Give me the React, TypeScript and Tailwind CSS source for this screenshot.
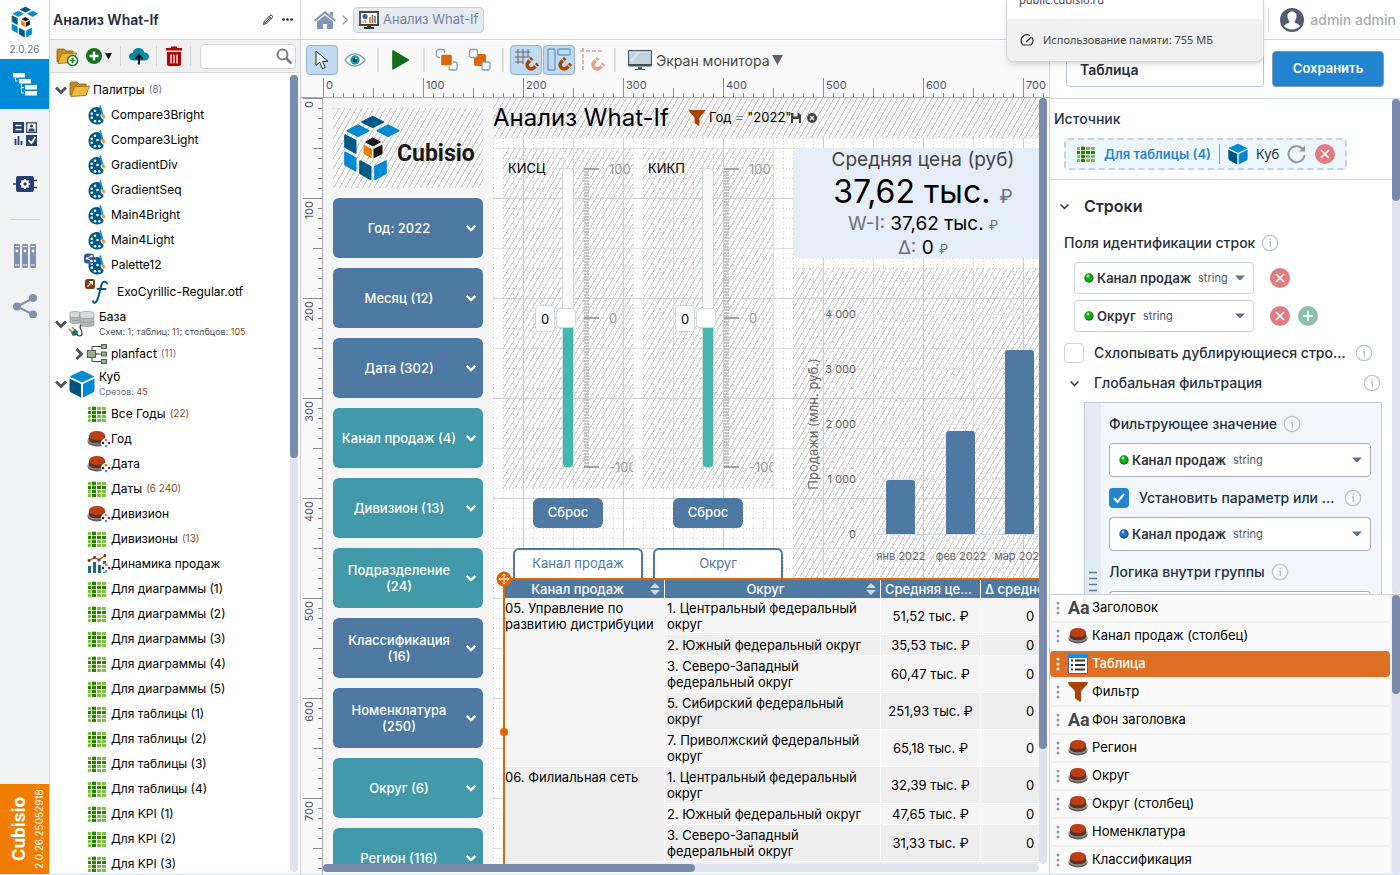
import React, { useState } from 'react';
import clsx from 'clsx';

const HATCH = 'bg-[repeating-linear-gradient(120deg,#cfcfcf_0,#cfcfcf_1px,transparent_1px,transparent_5px)]';

/* ---------- Icons ---------- */

const LogoMark: React.FC<{ className?: string }> = ({ className }) => (
  <svg viewBox="130 342 174 202" className={className} strokeLinejoin="round" strokeWidth="5">
    <g fill="#005a87" stroke="#005a87">
      <path d="M187 365l32-16 32 16-32 16z" />
      <path d="M136 404l32 17v37l-32-18z" />
      <path d="M181 482l32 17v38l-32-18z" />
    </g>
    <g fill="#008ad5" stroke="#008ad5">
      <path d="M143 391l32-16 32 16-32 17z" />
      <path d="M233 391l32-16 32 16-32 17z" />
      <path d="M136 456l32 18v37l-32-18z" />
      <path d="M226 499l33-17v37l-33 18z" />
    </g>
    <g fill="#1b1919" stroke="#1b1919" strokeWidth="3">
      <path d="M198 425l21-12 23 12-22 12z" />
      <path d="M223 447l24-12v25l-24 12z" />
    </g>
    <path d="M193 435l22 12v25l-22-12z" fill="#f07d00" stroke="#f07d00" strokeWidth="3" />
  </svg>
);

const CubeIcon: React.FC<{ className?: string }> = ({ className }) => (
  <svg viewBox="0 0 26 28" className={className}>
    <path d="M13 1l11.500 5.500L13 12 1.500 6.500z" fill="#008ad5" stroke="#008ad5" strokeLinejoin="round" />
    <path d="M.5 8.500l11.500 5.500v13.500L2 22.500Q.5 21.500.5 20z" fill="#005580" />
    <path d="M25.500 8.500L14 14v13.500l10-5q1.500-1 1.500-2.500z" fill="#008ad5" />
  </svg>
);

const GridIcon: React.FC = () => (
  <svg viewBox="0 0 20 16" className="h-4 w-5 shrink-0">
    <rect x="5" width="4" height="16" fill="#b7d8a2" />
    {[0, 1, 2, 3].map((r) =>
      [0, 1, 2, 3].map((c) => (
        <rect
          key={`${r}${c}`}
          x={[1, 5, 10, 15][c]}
          y={1 + r * 4}
          width={c === 0 ? 3 : 4}
          height="3"
          fill={c === 1 || r === 1 ? '#2f7d0a' : '#78c63c'}
        />
      ))
    )}
  </svg>
);

const PuckIcon: React.FC<{ dots?: boolean }> = ({ dots }) => (
  <svg viewBox="0 0 24 18" className="h-[18px] w-6 shrink-0">
    <ellipse cx="10" cy="11.500" rx="9.500" ry="5" fill="#5f5f5f" />
    <ellipse cx="10" cy="10" rx="9.500" ry="4.500" fill="#9a9a9a" />
    <path d="M2 5v5c0 4.500 16 4.500 16 0V5z" fill="#5d3527" />
    <ellipse cx="10" cy="5.500" rx="8" ry="4.500" fill="#bf3f15" />
    {dots && (
      <g>
        <circle cx="19" cy="13" r="5" fill="#fff" />
        <circle cx="19" cy="10" r="1.300" fill="#ef6a3a" />
        <circle cx="16" cy="13" r="1.300" fill="#222" />
        <circle cx="22" cy="13" r="1.300" fill="#b0125b" />
        <circle cx="19" cy="16" r="1.300" fill="#22a7d8" />
      </g>
    )}
  </svg>
);

const PaletteIcon: React.FC<{ shared?: boolean }> = ({ shared }) => (
  <svg viewBox="0 0 20 22" className="-my-1 h-[22px] w-5 shrink-0 overflow-visible">
    <path
      d="M10 3C4.500 3 1.500 7.500 1.500 12S5 20.500 10 20.500c3.500 0 6-1.500 6.500-3.500.3-1.500-1-2-2-2.800-1-1-1.200-3-.5-4.200 1-2 0-5-1-6-1-.8-2-1-3-1z"
      fill="#005a87"
    />
    <g fill="#fff">
      <circle cx="8" cy="6.700" r="1.300" />
      <circle cx="4.800" cy="9.800" r="1.300" />
      <circle cx="4.800" cy="13.800" r="1.300" />
      <circle cx="8" cy="17.300" r="1.300" />
      <circle cx="12.300" cy="17.300" r="1.300" />
      <circle cx="10.500" cy="11" r="1.300" />
    </g>
    <path d="M12.300 2l1.500-1 2.700 9.500-2 .8z" fill="#1a8fd8" />
    <path d="M14.500 11.500l2.500-1c1.500 1 1 3 .3 4.200-1.300-.5-2.300-1.500-2.800-3.200z" fill="#f58a1f" />
    {shared && (
      <g>
        <rect x="-3" y="-.5" width="10" height="10" rx="3" fill="#34599f" />
        <path d="M4.500 2L0 4.500l4.500 2.500" fill="none" stroke="#fff" strokeWidth="1" />
        <circle cx="0" cy="4.500" r="1.200" fill="#fff" />
        <circle cx="4.500" cy="2" r="1.200" fill="#fff" />
        <circle cx="4.500" cy="7" r="1.200" fill="#fff" />
      </g>
    )}
  </svg>
);

const FontIcon = () => (
  <svg viewBox="0 0 24 26" className="h-[26px] w-6 shrink-0">
    <rect width="10" height="10" rx="2.500" fill="#86390d" />
    <path d="M2.500 7.500l3-3M5 2.500l2.500 2.500V2.500z" stroke="#fff" fill="#fff" strokeWidth="1.200" />
    <path
      d="M22 4.500c-.5-2-3.500-2.500-5 0-2 4-3 17-6.500 19-1.500.6-2.500-.3-2.500-1.200M12.500 10h8"
      fill="none"
      stroke="#005a87"
      strokeWidth="2"
      strokeLinecap="round"
    />
  </svg>
);

const FolderIcon: React.FC<{ add?: boolean }> = ({ add }) => (
  <svg viewBox="0 0 22 19" className="h-[19px] w-[22px] shrink-0">
    <path d="M1 15V3.500Q1 2 2.500 2H8l2 2h7v11z" fill="#c98d1e" stroke="#8a5a10" strokeWidth=".8" />
    <path d="M2 16.500l3.500-9.800L20.500 6 17 15.500z" fill="#ecb93c" stroke="#9a6a14" strokeWidth=".8" />
    {add && (
      <g>
        <circle cx="16.500" cy="13.500" r="5" fill="#fff" stroke="#1a7a1f" strokeWidth="1.500" />
        <path d="M16.500 10.700v5.600M13.700 13.500h5.600" stroke="#1a7a1f" strokeWidth="1.600" />
      </g>
    )}
  </svg>
);

const DatabaseIcon = () => (
  <svg viewBox="0 0 26 28" className="h-7 w-[26px] shrink-0">
    {[[1, 2, 10, 3], [11, 2, 14, 4]].map(([x, y, w, h]) => (
      <g key={x} stroke="#8f979b" strokeWidth=".7">
        {[2, 1, 0].map((i) => (
          <path
            key={i}
            d={`M${x} ${y + i * h + 1}v${h}c0 2 ${w} 2 ${w} 0v-${h}c0-2-${w}-2-${w} 0z`}
            fill={i === 0 ? '#d5dadd' : '#b3babe'}
          />
        ))}
      </g>
    ))}
    <path d="M7 23c2 4 6 4 6 0 0-4-4-5-1-8" fill="none" stroke="#444" strokeWidth="1.200" />
    <path d="M0 19l3 3M3 17l3 3" stroke="#b37a2d" strokeWidth="1.400" />
    <path d="M2 23l4-4 3 3-1 3-4 1z" fill="#1e6f74" />
  </svg>
);

const SchemaIcon = () => (
  <svg viewBox="0 0 20 20" className="h-5 w-5 shrink-0" stroke="#48694b" fill="#94b292">
    <path d="M7 10h8M10 10H5V2.500h10M5 10v7.500h10" fill="none" stroke="#444" />
    <rect x=".5" y="6.500" width="8" height="7" />
    <rect x="14.500" y=".5" width="5" height="4" />
    <rect x="14.500" y="8" width="5" height="4" />
    <rect x="14.500" y="15.500" width="5" height="4" />
  </svg>
);

const DynamicsIcon = () => (
  <svg viewBox="0 0 24 20" className="h-5 w-6 shrink-0">
    <path d="M1 12h3v7H1zM6 8h3v11H6zM11 11h3v8h-3zM16 7h3v12h-3z" fill="#236b85" />
    <path d="M2 6.500l6-3 4 2.500 6-4.500" fill="none" stroke="#a35418" strokeWidth="1.200" />
    <g fill="#7a2f06">
      <circle cx="2" cy="6.500" r="1.400" />
      <circle cx="7.500" cy="3.500" r="1.400" />
      <circle cx="12" cy="6" r="1.400" />
      <circle cx="18" cy="1.500" r="1.400" />
    </g>
    <circle cx="19" cy="14" r="4.500" fill="#fff" />
    <circle cx="19" cy="11" r="1.300" fill="#ef6a3a" />
    <circle cx="16" cy="14" r="1.300" fill="#222" />
    <circle cx="22" cy="14" r="1.300" fill="#b0125b" />
    <circle cx="19" cy="17" r="1.300" fill="#22a7d8" />
  </svg>
);

const FunnelIcon: React.FC<{ className?: string }> = ({ className }) => (
  <svg viewBox="0 0 20 20" className={className}>
    <path d="M.5 0h19q.8 0 .3 1.200-.8 2-3.300 4.300-3.500 3-3.500 5v8.200q0 1.600-1.300.8L8 17.300q-1-.8-1-2V10.500q0-2-3.500-5Q1 3.200.2 1.200-.3 0 .5 0z" fill="#ab4300" />
  </svg>
);

const TextIcon = () => (
  <span aria-hidden="true" className="w-6 shrink-0 font-[Roboto] text-[18px] leading-5 font-bold text-[#484848]">Aa</span>
);

const ListIcon = () => (
  <svg viewBox="0 0 20 20" className="mr-1 h-5 w-5 shrink-0">
    <path d="M.5.5h19v19H.5z" fill="#fff" stroke="#3c6a96" />
    <path d="M0 0h20v4H0z" fill="#1590f2" />
    <path d="M3 6.500h2M7 6.500h10M3 11h2M7 11h10M3 15.500h2M7 15.500h10" stroke="#333" strokeWidth="1.800" />
  </svg>
);

const Chevron: React.FC<{ className?: string; width?: number }> = ({ className, width = 3 }) => (
  <svg viewBox="0 0 14 14" className={className} fill="none" stroke="currentColor" strokeWidth={width}>
    <path d="M2 4.500l5 5 5-5" />
  </svg>
);

const Ball: React.FC<{ blue?: boolean }> = ({ blue }) => (
  <svg viewBox="0 0 10 10" className="size-[10px] shrink-0">
    <circle cx="5" cy="5" r="4.700" fill={blue ? '#1c4f9c' : '#11800c'} />
    <circle cx="4.700" cy="4.400" r="3.500" fill={blue ? '#2b71cf' : '#17ae10'} />
    <circle cx="4" cy="3" r="1.500" fill={blue ? '#92bdf0' : '#8ce885'} />
  </svg>
);

const Info = () => (
  <svg viewBox="0 0 18 18" className="size-[18px] shrink-0">
    <circle cx="9" cy="9" r="7.700" fill="none" stroke="#bac5d1" strokeWidth="1.300" />
    <path d="M8 8h1.300v5M9.200 4.500v1.600" fill="none" stroke="#bac5d1" strokeWidth="1.500" />
  </svg>
);

const RoundButton: React.FC<{ kind: 'remove' | 'add'; label: string }> = ({ kind, label }) => (
  <button aria-label={label} className={clsx('flex size-5 items-center justify-center rounded-full', kind === 'add' ? 'bg-[#8dc0b1]' : 'bg-[#e07c7f]')}>
    <svg viewBox="0 0 12 12" className="size-3" stroke="#fff" strokeWidth="1.700">
      <path d={kind === 'add' ? 'M6 1v10M1 6h10' : 'M2 2l8 8M10 2l-8 8'} />
    </svg>
  </button>
);

const Caret: React.FC<{ className?: string }> = ({ className }) => (
  <svg viewBox="0 0 10 6" className={clsx('h-[6px] w-[10px] shrink-0', className)}>
    <path d="M0 .5h10L6 4.800Q5 5.500 4 4.800z" fill="#62728f" />
  </svg>
);

const Magnet: React.FC<{ color: string }> = ({ color }) => (
  <g transform="translate(12.500 11.500) rotate(-225 6 6)" fill="none" stroke={color} strokeWidth="3.600">
    <path d="M2 7.500V5.500a4 4 0 0 1 8 0v2" transform="rotate(90 6 6)" />
    <path d="M2 8.700v2.300M10 8.700v2.300" transform="rotate(90 6 6)" />
  </g>
);

/* ---------- Left rail ---------- */

const Rail = () => (
  <aside className="flex w-[49px] shrink-0 flex-col items-center bg-[#f1f2f4]">
    <div className="flex h-[59px] w-full flex-col items-center bg-white pt-[6px]">
      <LogoMark className="h-8 w-7 shrink-0" />
      <span className="mt-[3px] text-[10px] leading-4 text-gray-500">2.0.26</span>
    </div>
    <button aria-label="Структура" className="flex h-[50px] w-full items-center justify-center bg-[#008ad5]">
      <svg viewBox="0 0 24 24" className="size-6">
        <path d="M0 1h12v4.500H0zM6 7h12v4.500H6zM12 13h12v4.500H12zM12 19h12v4.500H12z" fill="#fff" />
        <path d="M2.500 6v3h2M8.500 12v9h2.500M8.500 15.500H11" fill="none" stroke="#fff" />
      </svg>
    </button>
    <button aria-label="Виджеты" className="flex h-[50px] w-full items-center justify-center">
      <svg viewBox="0 0 24 24" className="size-6">
        <path d="M0 0h11v11H0zM13 13h11v11H13z" fill="#27406f" />
        <path d="M2.500 3.500h6M2.500 7.500h6" stroke="#fff" strokeWidth="1.500" />
        <path d="M13.800.8h9.500v9.500h-9.500z" fill="#fff" stroke="#27406f" strokeWidth="1.200" />
        <circle cx="18.500" cy="4" r="1.600" fill="#27406f" />
        <path d="M15.500 9.500V8q0-1.800 3-1.800t3 1.800v1.500z" fill="#27406f" />
        <path d="M2.500 17v6M5.500 14v9M8.500 19v4" stroke="#27406f" strokeWidth="1.800" />
        <path d="M15.500 18l3 3 4-6" fill="none" stroke="#fff" strokeWidth="1.800" />
      </svg>
    </button>
    <button aria-label="Настройки" className="flex h-[50px] w-full items-center justify-center">
      <svg viewBox="0 0 24 18" className="h-[18px] w-6">
        <path d="M0 9h4M20 5.500h4M20 12.500h4" stroke="#27406f" strokeWidth="1.500" />
        <rect x="3" y="1" width="18" height="16" rx="2" fill="#27406f" />
        <circle cx="12" cy="9" r="2.800" fill="none" stroke="#fff" strokeWidth="2.400" />
        <path d="M12 4v10M7 9h10M8.500 5.500l7 7M15.500 5.500l-7 7" stroke="#fff" strokeWidth="1.500" />
        <circle cx="12" cy="9" r="1.700" fill="#27406f" />
      </svg>
    </button>
    <hr className="mt-[10px] mb-[11px] w-[30px] border-gray-300" />
    <button aria-label="Библиотека" className="flex h-[50px] w-full items-center justify-center">
      <svg viewBox="0 0 24 24" className="size-6 overflow-visible">
        {[1, 9, 17].map((x) => (
          <g key={x}>
            <rect x={x} width="6" height="24" rx=".8" fill="#8292ae" />
            <path d={`M${x + 1} 2.500h4M${x + 1} 21h4`} stroke="#f1f2f4" />
            <circle cx={x + 3} cy="7" r="1.400" fill="#f1f2f4" />
          </g>
        ))}
      </svg>
    </button>
    <button aria-label="Поделиться" className="flex h-[50px] w-full items-center justify-center">
      <svg viewBox="0 0 24 24" className="size-6" fill="#8292ae">
        <path d="M20 4.500L4 12.500l16 8" fill="none" stroke="#8292ae" strokeWidth="2" />
        <circle cx="20" cy="4" r="4" />
        <circle cx="4" cy="12.500" r="4" />
        <circle cx="20" cy="20.500" r="4" />
      </svg>
    </button>
    <div className="mt-auto flex h-[90px] w-full rotate-180 items-center bg-[#f07d00] pl-[2px] text-white">
      <span className="text-[10px] leading-4 [writing-mode:vertical-rl]">2.0.26.25052918</span>
      <span className="font-[Roboto] text-[19px] leading-6 font-bold [writing-mode:vertical-rl]">Cubisio</span>
    </div>
  </aside>
);

/* ---------- Object tree ---------- */

interface TreeLeaf {
  name: string;
  count?: string;
  icon: React.ReactNode;
}

const palettes = ['Compare3Bright', 'Compare3Light', 'GradientDiv', 'GradientSeq', 'Main4Bright', 'Main4Light', 'Palette12'];

const slices: TreeLeaf[] = [
  { name: 'Все Годы', count: '(22)', icon: <GridIcon /> },
  { name: 'Год', icon: <PuckIcon dots /> },
  { name: 'Дата', icon: <PuckIcon dots /> },
  { name: 'Даты', count: '(6 240)', icon: <GridIcon /> },
  { name: 'Дивизион', icon: <PuckIcon dots /> },
  { name: 'Дивизионы', count: '(13)', icon: <GridIcon /> },
  { name: 'Динамика продаж', icon: <DynamicsIcon /> },
  ...[1, 2, 3, 4, 5].map((n) => ({ name: `Для диаграммы (${n})`, icon: <GridIcon /> })),
  ...[1, 2, 3, 4].map((n) => ({ name: `Для таблицы (${n})`, icon: <GridIcon /> })),
  ...[1, 2, 3].map((n) => ({ name: `Для KPI (${n})`, icon: <GridIcon /> })),
];

const Leaf: React.FC<TreeLeaf> = ({ name, count, icon }) => (
  <li className="flex h-[25px] items-center pl-[37px]">
    <span className="flex w-6 shrink-0">{icon}</span>
    {name}
    {count && <span className="ml-1 text-[10px] text-[#8a4b12]">{count}</span>}
  </li>
);

const Tree = () => (
  <aside className="flex w-[252px] shrink-0 flex-col border-x border-[#cfd2da] bg-white">
    <div className="flex h-10 shrink-0 items-center border-b border-[#d0d2d8] pr-[2px] pl-[3px]">
      <h1 className="flex-1 text-[14px] font-semibold text-[#1f2a44]">Анализ What-If</h1>
      <button aria-label="Переименовать" className="mr-2">
        <svg viewBox="0 0 12 12" className="size-3" fill="none" stroke="#333">
          <path d="M1.500 10.500l.8-3 5.700-6q1-.8 2 0t.2 2L4.300 9.500zM2.300 7.500l2 2M4 8l5-5M7 2.500l2.500 2" />
        </svg>
      </button>
      <button aria-label="Меню" className="w-4">
        <svg viewBox="0 0 12 3" className="h-[3px] w-3" fill="#222">
          <circle cx="1.500" cy="1.500" r="1.300" /><circle cx="5.500" cy="1.500" r="1.300" /><circle cx="9.500" cy="1.500" r="1.300" />
        </svg>
      </button>
    </div>
    <div className="flex h-[33px] shrink-0 items-center border-b border-[#d8d8d8] bg-[#f0f0f0] pr-1 pl-[6px]">
      <button aria-label="Создать папку"><FolderIcon add /></button>
      <button aria-label="Добавить" className="ml-2 flex items-center">
        <svg viewBox="0 0 26 16" className="h-4 w-[26px]">
          <circle cx="8" cy="8" r="8" fill="#16731c" />
          <path d="M8 3.500v9M3.500 8h9" stroke="#fff" strokeWidth="2.400" />
          <path d="M19 5h7l-3.500 6.500z" fill="#111" />
        </svg>
      </button>
      <i className="mx-2 h-5 w-px bg-gray-300" />
      <button aria-label="Загрузить">
        <svg viewBox="0 0 20 17" className="h-[17px] w-5">
          <path d="M5 12.500C2 12.500 0 11 0 8.500S2 5 4 5c0-3 2.500-5 5.500-5S15 2 15.200 4.500C18 4.500 20 6 20 8.500s-2 4-4.500 4z" fill="#0787a8" />
          <path d="M10 16.500V8M6.500 11L10 7.300l3.500 3.700" fill="none" stroke="#111" strokeWidth="2" />
        </svg>
      </button>
      <i className="mx-[7px] h-5 w-px bg-gray-300" />
      <button aria-label="Удалить" className="ml-[2px]">
        <svg viewBox="0 0 16 20" className="h-5 w-4">
          <path d="M0 2h5V.5h6V2h5v2.500H0zM1 6h14v12q0 2-2 2H3q-2 0-2-2z" fill="#b40000" />
          <path d="M5 8.500v9M8 8.500v9M11 8.500v9" stroke="#f0f0f0" strokeWidth="1.400" />
        </svg>
      </button>
      <i className="mx-2 h-5 w-px bg-gray-300" />
      <label className="ml-auto flex h-[25px] w-24 items-center rounded border border-gray-300 bg-white pr-[3px]">
        <input aria-label="Поиск" className="w-0 flex-1 bg-transparent px-1 text-xs outline-none" />
        <svg viewBox="0 0 16 16" className="size-4" fill="none" stroke="#7d7d7d" strokeWidth="2">
          <circle cx="6.500" cy="6.500" r="5" /><path d="M10 10l5.500 5.500" strokeWidth="2.600" />
        </svg>
      </label>
    </div>
    <div className="flex min-h-0 flex-1">
      <ul className="min-w-0 flex-1 overflow-hidden pt-1 text-[12px] whitespace-nowrap text-black">
        <li className="flex h-[25px] items-center pl-1">
          <Chevron className="mr-px size-[14px] text-gray-600" />
          <FolderIcon />
          <span className="ml-[2px]">Палитры</span>
          <span className="ml-1 text-[10px] text-gray-500">(8)</span>
        </li>
        {palettes.map((name) => (
          <Leaf key={name} name={name} icon={<PaletteIcon shared={name === 'Palette12'} />} />
        ))}
        <li className="flex h-[29px] items-center gap-2 pl-[35px]"><FontIcon />ExoCyrillic-Regular.otf</li>
        <li className="flex h-[35px] items-center pl-1">
          <Chevron className="mr-px size-[14px] text-gray-600" />
          <DatabaseIcon />
          <span className="ml-1 flex flex-col">
            <span className="leading-4">База</span>
            <span className="text-[9px] leading-[14px] text-gray-600">
              Схем: <b className="font-normal text-[#8a4b12]">1</b>; таблиц: <b className="font-normal text-[#8a4b12]">11</b>; столбцов: <b className="font-normal text-[#8a4b12]">105</b>
            </span>
          </span>
        </li>
        <li className="flex h-[25px] items-center pl-[22px]">
          <Chevron className="mr-px size-[14px] -rotate-90 text-gray-600" />
          <SchemaIcon />
          <span className="ml-1">planfact</span>
          <span className="ml-1 text-[10px] text-gray-500">(11)</span>
        </li>
        <li className="flex h-[35px] items-center pl-1">
          <Chevron className="mr-px size-[14px] text-gray-600" />
          <CubeIcon className="h-7 w-[26px] shrink-0" />
          <span className="ml-1 flex flex-col">
            <span className="leading-4">Куб</span>
            <span className="text-[9px] leading-[14px] text-gray-500">Срезов: <b className="font-normal text-[#8a4b12]">45</b></span>
          </span>
        </li>
        {slices.map((s) => <Leaf key={s.name} {...s} />)}
      </ul>
      <div className="my-[2px] mr-[2px] w-2 rounded bg-[#dfe3ee]">
        <div className="h-[48%] rounded bg-[#7a8bae]" />
      </div>
    </div>
  </aside>
);

/* ---------- Top bars ---------- */

const Header = () => (
  <header className="flex h-10 shrink-0 items-center border-b border-[#cfd2da] bg-white pr-1 pl-3">
    <a href="#home" aria-label="Главная">
      <svg viewBox="0 0 24 20" className="h-5 w-6" fill="#8296bb">
        <path d="M12 1l11 9-1.300 1.500L12 3.800l-9.700 7.700L1 10z" />
        <path d="M4 11.500l8-6.300 8 6.300V19h-6v-5h-4v5H4zM17 2h3v5l-3-2.400z" />
      </svg>
    </a>
    <Chevron width={1.500} className="mx-[2px] size-3 -rotate-90 text-[#8296bb]" />
    <a href="#dashboard" className="flex h-[26px] items-center gap-1 rounded border border-[#c3cfe2] bg-[#e6eaf1] px-[5px] text-[13px] text-[#73839f]">
      <svg viewBox="0 0 20 18" className="h-[18px] w-5">
        <path d="M1 1h18v13H1z" fill="#fff" stroke="#444" strokeWidth="1.800" />
        <path d="M5 17h10M8 15h4" stroke="#333" strokeWidth="2" />
        <circle cx="6" cy="5.500" r="2.500" fill="#1b65b5" /><path d="M6 5.500V3a2.500 2.500 0 0 1 2.500 2.500z" fill="#e2421b" />
        <path d="M11 12V6M13.500 12V4" stroke="#e2561b" strokeWidth="1.500" /><path d="M16 12V5" stroke="#178d9e" strokeWidth="1.500" />
        <path d="M4 12v-2M6.500 12v-3" stroke="#e2a51b" strokeWidth="1.500" />
      </svg>
      Анализ What-If
    </a>
    <div className="ml-auto flex items-center border-l border-gray-300 pl-[11px] text-[14px] font-medium text-[#a7abb2]">
      <svg viewBox="0 0 24 24" className="mr-[6px] size-6">
        <circle cx="12" cy="12" r="12" fill="#4e5d74" />
        <path d="M12 3.500c3 0 4.800 2 4.500 5-.2 2.500-1.200 4-2 5 .2 2 4.500 2 5.500 4.500-4 4.500-12 4.500-16 0 1-2.500 5.300-2.500 5.500-4.500-.8-1-1.800-2.500-2-5-.3-3 1.500-5 4.500-5z" fill="#fff" />
      </svg>
      admin admin
    </div>
  </header>
);

const ToolButton: React.FC<{ label: string; active?: boolean; children: React.ReactNode }> = ({ label, active, children }) => (
  <button
    aria-label={label}
    className={clsx('flex h-[30px] w-8 items-center justify-center rounded border', active ? 'border-[#8fb1d6] bg-[#c0daf0]' : 'border-transparent')}
  >
    {children}
  </button>
);

const Divider = () => <i className="mx-[6px] h-6 w-[2px] bg-[#dcdcdc]" />;

const Toolbar = () => (
  <div className="flex h-[34px] items-end bg-[#f9f9f9] pl-[5px]">
    <div className="flex h-[30px] items-center">
      <ToolButton label="Выбор" active>
        <svg viewBox="0 0 14 20" className="h-5 w-[14px]">
          <path d="M1 1v14.500l3.700-3.300 2.800 6.500 2.700-1.200-2.700-6.200H13z" fill="#fff" stroke="#222" />
        </svg>
      </ToolButton>
      <div className="w-px" />
      <ToolButton label="Просмотр">
        <svg viewBox="0 0 22 14" className="h-[14px] w-[22px]">
          <path d="M1 7q4.500-6 10-6t10 6q-4.500 6-10 6T1 7z" fill="#fff" stroke="#86a1a6" strokeWidth="1.300" />
          <circle cx="11" cy="7" r="4.700" fill="#00a0b8" /><circle cx="11" cy="7" r="2.300" fill="#13323a" />
          <circle cx="12" cy="5.500" r="1" fill="#fff" />
        </svg>
      </ToolButton>
      <Divider />
      <ToolButton label="Запустить">
        <svg viewBox="0 0 18 20" className="h-5 w-[18px]"><path d="M1 0q-.8 0-.8 1v18q0 1 .8.800l16-9.300q.8-.5 0-1z" fill="#136d1c" /></svg>
      </ToolButton>
      <Divider />
      <ToolButton label="На передний план">
        <svg viewBox="0 0 24 24" className="size-6" fill="none" stroke="#7e9fc5" strokeWidth="1.300">
          <rect x="1.500" y="1.500" width="8" height="8" rx="2" /><rect x="14" y="14" width="8" height="8" rx="2" />
          <rect x="5.500" y="6" width="12" height="12" rx="2" fill="#df6600" stroke="#f9f9f9" />
        </svg>
      </ToolButton>
      <div className="w-px" />
      <ToolButton label="На задний план">
        <svg viewBox="0 0 24 24" className="size-6" stroke="#7e9fc5" strokeWidth="1.300">
          <rect x="6" y="6" width="12" height="12" rx="2" fill="#df6600" stroke="none" />
          <rect x="1.500" y="1.500" width="8" height="8" rx="2" fill="#f9f9f9" /><rect x="14" y="14" width="8" height="8" rx="2" fill="#f9f9f9" />
        </svg>
      </ToolButton>
      <Divider />
      <ToolButton label="Привязка к сетке" active>
        <svg viewBox="0 0 26 26" className="size-[26px]">
          <path d="M5 2v15M10 2v15M15 2v8M2 5h15M2 10h15M2 15h8" stroke="#666" fill="none" />
          <Magnet color="#ac4300" />
        </svg>
      </ToolButton>
      <div className="w-px" />
      <ToolButton label="Привязка к объектам" active>
        <svg viewBox="0 0 26 26" className="size-[26px]" fill="none" stroke="#6f9bc8" strokeWidth="1.400">
          <rect x="2" y="2" width="7" height="21" rx="1" /><rect x="12" y="2" width="12" height="6" rx="1" />
          <Magnet color="#ac4300" />
        </svg>
      </ToolButton>
      <div className="w-px" />
      <ToolButton label="Направляющие">
        <svg viewBox="0 0 26 26" className="size-[26px]">
          <path d="M4 1v22M1 4h23" stroke="#e5a3a8" strokeWidth="1.700" strokeDasharray="4 2" />
          <Magnet color="#dba582" />
        </svg>
      </ToolButton>
      <Divider />
      <button className="flex items-center pl-[6px] text-[14px] text-[#444]">
        <svg viewBox="0 0 24 20" className="mr-1 h-5 w-6">
          <path d="M.5.500h23v15H.5z" fill="#c0d2de" stroke="#3d4f5c" /><path d="M.5 14h23v2.500H.5z" fill="#40525f" />
          <path d="M2 10L9 2h4L4 12z" fill="#d6e3eb" /><path d="M10 17h4v2h3v1H7v-1h3z" fill="#52636f" />
        </svg>
        Экран монитора
        <svg viewBox="0 0 11 10" className="ml-[2px] h-[10px] w-[11px]"><path d="M0 0h11L5.500 10z" fill="#606060" /></svg>
      </button>
    </div>
  </div>
);

/* ---------- Rulers ---------- */

const steps = [0, 100, 200, 300, 400, 500, 600, 700];

const TopRuler = () => (
  <div className="flex h-[23px] shrink-0 overflow-hidden border-b border-[#aaa] bg-[#f9f9f9] pl-[22px]">
    {steps.map((n) => (
      <div key={n} className="relative h-full w-[100px] shrink-0 pl-[3px] text-[11px] leading-[20px] text-gray-600">
        <svg viewBox="0 0 100 22" className="absolute inset-0 h-[22px] w-[100px]" stroke="#8c8c8c">
          <path d="M.5 3v19M50.500 13v9" />
          <path d="M10.500 18v4M20.500 18v4M30.500 18v4M40.500 18v4M60.500 18v4M70.500 18v4M80.500 18v4M90.500 18v4" />
        </svg>
        {n}
      </div>
    ))}
  </div>
);

const SideRuler = () => (
  <div className="flex w-[22px] shrink-0 flex-col overflow-hidden border-r border-[#aaa] bg-[#f9f9f9]">
    {steps.map((n) => (
      <div key={n} className="relative flex h-[100px] w-full shrink-0 items-start pt-[3px] text-[11px] leading-[17px] text-gray-600">
        <svg viewBox="0 0 21 100" className="absolute inset-0 h-[100px] w-[21px]" stroke="#8c8c8c">
          <path d="M2 .5h19M12 50.500h9" />
          <path d="M17 10.500h4M17 20.500h4M17 30.500h4M17 40.500h4M17 60.500h4M17 70.500h4M17 80.500h4M17 90.500h4" />
        </svg>
        <span className="rotate-180 [writing-mode:vertical-rl]">{n}</span>
      </div>
    ))}
  </div>
);

/* ---------- Dashboard canvas ---------- */

const CanvasGrid = () => (
  <svg className="absolute inset-0 size-full">
    <defs>
      <pattern id="dots" width="10" height="10" patternUnits="userSpaceOnUse">
        <path d="M.5 0v10M0 .5h10" stroke="#d9d9d9" strokeDasharray="1 2" />
      </pattern>
      <pattern id="lines" width="100" height="100" patternUnits="userSpaceOnUse">
        <rect width="100" height="100" fill="url(#dots)" />
        <path d="M50.500 0v100M0 50.500h100" stroke="#e0e0e0" />
        <path d="M.5 0v100M0 .5h100" stroke="#cfcfcf" />
      </pattern>
    </defs>
    <rect width="100%" height="100%" fill="url(#lines)" />
  </svg>
);

const filters = [
  { name: 'Год: 2022', teal: false },
  { name: 'Месяц (12)', teal: false },
  { name: 'Дата (302)', teal: false },
  { name: 'Канал продаж (4)', teal: true },
  { name: 'Дивизион (13)', teal: true },
  { name: 'Подразделение (24)', teal: true },
  { name: 'Классификация (16)', teal: false },
  { name: 'Номенклатура (250)', teal: false },
  { name: 'Округ (6)', teal: true },
  { name: 'Регион (116)', teal: true },
];

const FilterColumn = () => (
  <div className="flex w-[170px] shrink-0 flex-col gap-[10px] bg-[#f5f5f5] p-[10px]">
    <div className={clsx('flex h-20 shrink-0 items-center pl-[10px]', HATCH)}>
      <LogoMark className="h-[68px] w-[58px] shrink-0" />
      <span className="-ml-1 pt-3 font-[Roboto] text-[23px] leading-8 font-bold text-[#1b1919]">Cubisio</span>
    </div>
    {filters.map((f) => (
      <button
        key={f.name}
        className={clsx('flex h-[60px] shrink-0 items-center rounded-md pr-[6px] text-[13px] leading-4 font-medium text-white', f.teal ? 'bg-[#4199a9]' : 'bg-[#4e79a3]')}
      >
        <span className="flex-1 px-1">{f.name}</span>
        <Chevron width={2.600} className="size-3" />
      </button>
    ))}
  </div>
);

const WhatIfSlider: React.FC<{ name: string }> = ({ name }) => {
  const [value, setValue] = useState(0);

  return (
    <div className={clsx('flex h-[340px] w-[130px] overflow-hidden', HATCH)}>
      <div className="flex w-[52px] shrink-0 flex-col pt-3">
        <span className="pl-[5px] text-[13px] leading-4 text-black">{name}</span>
        <input
          aria-label={`${name}, значение`}
          value={value}
          onChange={(e) => setValue(Number(e.target.value) || 0)}
          className="mt-[129px] h-[27px] w-5 self-end rounded-sm border border-gray-300 bg-white text-center text-[13px] text-black"
        />
      </div>
      <input
        type="range"
        aria-label={name}
        min={-100}
        max={100}
        value={value}
        onChange={(e) => setValue(Number(e.target.value))}
        className="mt-5 ml-[7px] h-[300px] w-3 shrink-0 appearance-none rounded border border-gray-300 bg-[linear-gradient(to_top,#42b8b0_50%,#f9f9f9_50%)] [direction:rtl] [writing-mode:vertical-lr] [&::-webkit-slider-thumb]:-ml-[5px] [&::-webkit-slider-thumb]:size-5 [&::-webkit-slider-thumb]:appearance-none [&::-webkit-slider-thumb]:rounded-sm [&::-webkit-slider-thumb]:border [&::-webkit-slider-thumb]:border-gray-300 [&::-webkit-slider-thumb]:bg-white"
      />
      <svg viewBox="0 0 15 300" className="mt-5 ml-[10px] h-[300px] w-[15px] shrink-0" stroke="#c4c4c4">
        <path d="M2.500 0v298" strokeWidth="5" strokeDasharray="2 1" />
        <path d="M0 1h15M0 150h15M0 299h15" stroke="#a3a3a3" strokeWidth="2" />
      </svg>
      <div className="mt-[13px] ml-[10px] flex h-[314px] shrink-0 flex-col justify-between text-[13px] leading-4 text-[#9a9a9a]">
        <span>100</span>
        <span>0</span>
        <span>-100</span>
      </div>
    </div>
  );
};

const Kpi = () => (
  <div className="h-[110px] w-[260px] rounded-md bg-[#e5eef7] text-center text-[19px] leading-6 text-black">
    <div className="h-6 text-[#444]">Средняя цена (руб)</div>
    <div className="h-10 text-[32px] leading-[40px]">37,62 тыс. <span className="text-[19px] leading-none text-gray-500">₽</span></div>
    <div className="h-6"><span className="text-gray-500">W-I:</span> 37,62 тыс. <span className="text-[13px] leading-none text-gray-500">₽</span></div>
    <div className="h-6"><span className="text-gray-500">Δ:</span> 0 <span className="text-[13px] leading-none text-gray-500">₽</span></div>
  </div>
);

const bars = [
  { label: 'янв 2022', x: 93, top: 212 },
  { label: 'фев 2022', x: 153, top: 163 },
  { label: 'мар 2022', x: 212, top: 82 },
];

const SalesChart = () => (
  <div className={clsx('h-[310px] w-[260px]', HATCH)}>
    <svg viewBox="0 0 260 310" className="h-[310px] w-[260px]" fill="#666">
      <text transform="translate(25 156) rotate(-90)" textAnchor="middle" fontSize="13">Продажи (млн. руб.)</text>
      {[4, 3, 2, 1, 0].map((v, i) => (
        <g key={v}>
          <path d={`M80 ${46.500 + i * 55}h180`} stroke={v ? '#e6e6e6' : '#ccd6eb'} />
          <text x="63" y={50 + i * 55} textAnchor="end" fontSize="11">{v ? `${v} 000` : '0'}</text>
        </g>
      ))}
      {bars.map((b) => (
        <g key={b.label}>
          <path d={`M${b.x} 266V${b.top + 3}q0-3 3-3h23q3 0 3 3V266z`} fill="#4e79a3" />
          <text x={b.x + 15} y="292" textAnchor="middle" fontSize="11">{b.label}</text>
        </g>
      ))}
    </svg>
  </div>
);

const tableRows = [
  { channel: '05. Управление по развитию дистрибуции', span: 5, region: '1. Центральный федеральный округ', price: '51,52' },
  { region: '2. Южный федеральный округ', price: '35,53' },
  { region: '3. Северо-Западный федеральный округ', price: '60,47' },
  { region: '5. Сибирский федеральный округ', price: '251,93' },
  { region: '7. Приволжский федеральный округ', price: '65,18' },
  { channel: '06. Филиальная сеть', span: 3, region: '1. Центральный федеральный округ', price: '32,39' },
  { region: '2. Южный федеральный округ', price: '47,65' },
  { region: '3. Северо-Западный федеральный округ', price: '31,33' },
];

const SortMark = () => (
  <svg viewBox="0 0 10 12" className="h-3 w-[10px] shrink-0" fill="#ccd8e4"><path d="M5 0l5 5H0zM0 7h10l-5 5z" /></svg>
);

const DataTable = () => (
  <div className="relative ml-[10px] w-[620px] grow border-t-2 border-l-2 border-[#df6600] bg-[#eeeeee]">
    <svg viewBox="0 0 16 16" className="absolute -top-[9px] -left-[9px] size-4">
      <circle cx="8" cy="8" r="7.500" fill="#df6600" />
      <path d="M8 3v10M3 8h10M6.500 4.500L8 3l1.500 1.500M6.500 11.500L8 13l1.500-1.500M4.500 6.500L3 8l1.500 1.500M11.500 6.500L13 8l-1.500 1.500" fill="none" stroke="#fff" />
    </svg>
    <span className="absolute top-[148px] -left-[5px] size-2 rounded-full bg-[#df6600]" />
    <table className="w-full table-fixed border-separate border-spacing-0 text-[13px] leading-4 text-black">
      <colgroup>
        <col className="w-[160px]" />
        <col className="w-[216px]" />
        <col className="w-[100px]" />
        <col />
      </colgroup>
      <thead className="bg-[#4e79a3] text-white">
        <tr className="h-[18px]">
          <th className="border-r border-white p-0 pr-1 font-medium">
            <div className="flex items-center"><span className="flex-1">Канал продаж</span><SortMark /></div>
          </th>
          <th className="border-r border-white p-0 pr-1 font-medium">
            <div className="flex items-center"><span className="flex-1">Округ</span><SortMark /></div>
          </th>
          <th className="truncate border-r border-white px-1 py-0 text-left font-medium">Средняя цена (руб)</th>
          <th className="px-1 py-0 text-left font-medium">Δ средней цены</th>
        </tr>
      </thead>
      <tbody>
        {tableRows.map((r, i) => {
          const cell = clsx('border-b border-white py-[2px]', i % 2 ? 'bg-[#eeeeee]' : 'bg-[#f5f5f5]');
          return (
            <tr key={i}>
              {r.channel && (
                <td rowSpan={r.span} className={clsx('border-r align-top', cell)}>{r.channel}</td>
              )}
              <td className={clsx('border-r px-[2px]', cell)}>{r.region}</td>
              <td className={clsx('border-r text-center', cell)}>{r.price} тыс. ₽</td>
              <td className={clsx('pl-[45px]', cell)}>0</td>
            </tr>
          );
        })}
      </tbody>
    </table>
  </div>
);

const Canvas = () => (
  <div className="relative flex min-w-0 flex-1 overflow-hidden bg-white">
    <CanvasGrid />
    <div className="relative flex shrink-0">
      <FilterColumn />
      <div className="flex w-[640px] shrink-0 flex-col">
        <div className={clsx('flex h-10 shrink-0 items-center bg-[#f4f4f4]', HATCH)}>
          <h2 className="text-[24px] text-black">Анализ What-If</h2>
          <FunnelIcon className="mr-1 ml-5 h-4 w-4" />
          <span className="text-[13px] text-black">Год <span className="text-[#5b7390]">=</span> "2022"</span>
          <svg viewBox="0 0 26 10" className="h-[10px] w-[26px]" fill="#444">
            <path d="M0 0h8l2 2v8H0z" />
            <circle cx="21" cy="5" r="5" />
            <path d="M2.500 0h4v3.500h-4zM2 6h6v4H2z" fill="#f0f0f0" />
            <path d="M19 3l4 4M23 3l-4 4" stroke="#f4f4f4" strokeWidth="1.300" />
          </svg>
        </div>
        <div className="flex pt-[10px] pl-[10px]">
          <div className="w-[290px] shrink-0">
            <div className="flex gap-[10px]">
              {['КИСЦ', 'КИКП'].map((name) => (
                <div key={name} className="flex flex-col items-center">
                  <WhatIfSlider name={name} />
                  <button className="mt-[10px] h-[30px] w-[70px] rounded-md bg-[#4e79a3] text-[13px] font-medium text-white">Сброс</button>
                </div>
              ))}
            </div>
            <div className="mt-5 ml-[10px] flex gap-[10px] text-[13px] text-[#4e79a3]">
              <button className="h-[30px] w-[130px] rounded-t-md border-2 border-b-0 border-[#4e79a3] bg-white">Канал продаж</button>
              <button className="h-[30px] w-[130px] rounded-t-md border-2 border-b-0 border-[#4e79a3] bg-white">Округ</button>
            </div>
          </div>
          <div className="flex flex-col gap-[10px]">
            <Kpi />
            <SalesChart />
          </div>
        </div>
        <DataTable />
      </div>
    </div>
  </div>
);

const Designer = () => (
  <main className="flex min-w-0 flex-1 flex-col border-r border-[#cfd2da] bg-white pt-px">
    <Toolbar />
    <TopRuler />
    <div className="flex min-h-0 flex-1">
      <SideRuler />
      <div className="flex min-w-0 flex-1 flex-col">
        <div className="flex min-h-0 flex-1">
          <Canvas />
          <div className="mr-[2px] w-2 rounded bg-[#dfe3ee]"><div className="h-[85%] rounded bg-[#7a8bae]" /></div>
        </div>
        <div className="mr-[10px] mb-[2px] h-2 rounded bg-[#dfe3ee]"><div className="h-full w-[52%] rounded bg-[#7a8bae]" /></div>
      </div>
    </div>
  </main>
);

/* ---------- Properties ---------- */

const FieldSelect: React.FC<{ name: string; label: string; blue?: boolean; className?: string }> = ({ name, label, blue, className }) => (
  <label className={clsx('flex items-center rounded border bg-white pr-[8px] pl-[9px]', className)}>
    <Ball blue={blue} />
    <select aria-label={label} className="ml-[3px] appearance-none bg-transparent text-[13px] font-semibold text-[#2c3441] outline-none">
      <option>{name}</option>
    </select>
    <span className="ml-[7px] text-[11px] font-normal text-gray-600">string</span>
    <Caret className="ml-auto" />
  </label>
);

const Properties = () => (
  <div className="flex min-h-0 flex-1">
    <div className="min-w-0 flex-1 overflow-hidden text-[14px] leading-5 text-[#25303f]">
      <section className="border-b border-[#cfd6e4] pt-[10px] pb-[9px] pl-1">
        <h3 className="font-medium">Источник</h3>
        <div className="mt-[9px] ml-[10px] flex h-8 w-[283px] items-center rounded border-2 border-dashed border-[#bdd3ee] bg-[#eef6fd] pl-[10px] text-[13px]">
          <GridIcon />
          <a href="#slice" className="ml-2 font-semibold text-[#2a86d2]">Для таблицы (4)</a>
          <i className="mx-2 h-5 w-px bg-[#8a99ad]" />
          <CubeIcon className="h-[22px] w-5" />
          <span className="ml-2">Куб</span>
          <button aria-label="Обновить" className="mx-2">
            <svg viewBox="0 0 20 20" className="size-5" fill="none" stroke="#8e99a6" strokeWidth="2">
              <path d="M17.500 11a8 8 0 1 1-2.500-6.700l2 2" />
              <path d="M18 1.500v6h-6z" fill="#8e99a6" stroke="none" />
            </svg>
          </button>
          <RoundButton kind="remove" label="Убрать источник" />
        </div>
      </section>
      <section className="pt-4 pl-[14px]">
        <h3 className="flex h-5 items-center text-[16px] font-semibold">
          <Chevron width={2} className="-ml-[5px] mr-[14px] size-[11px]" />Строки
        </h3>
        <div className="mt-[17px] flex h-5 items-center gap-[6px] font-medium">Поля идентификации строк<Info /></div>
        <div className="mt-[9px] ml-[10px] flex flex-col gap-[6px]">
          <div className="flex items-center">
            <FieldSelect name="Канал продаж" label="Поле 1" className="h-8 w-[180px] border-[#ccd3e0]" />
            <span className="ml-4"><RoundButton kind="remove" label="Удалить поле 1" /></span>
          </div>
          <div className="flex items-center gap-2">
            <FieldSelect name="Округ" label="Поле 2" className="mr-2 h-8 w-[180px] border-[#ccd3e0]" />
            <RoundButton kind="remove" label="Удалить поле 2" />
            <RoundButton kind="add" label="Добавить поле" />
          </div>
        </div>
        <div className="mt-[11px] flex items-center">
          <input id="collapse" type="checkbox" className="size-5 shrink-0 appearance-none rounded border border-[#ccd3e0] bg-white" />
          <label htmlFor="collapse" className="mr-[9px] ml-[10px] w-[252px] truncate font-medium">Схлопывать дублирующиеся строки</label>
          <Info />
        </div>
        <div className="mt-[10px] flex items-center font-medium">
          <Chevron width={2} className="mr-[14px] ml-[5px] size-[11px]" />
          <span className="flex-1">Глобальная фильтрация</span>
          <span className="mr-[11px]"><Info /></span>
        </div>
        <div className="mt-[9px] mr-[10px] ml-5 flex border border-[#bccbe0] bg-[#f1f7fc]">
          <div className="flex w-4 shrink-0 items-end justify-center bg-[#e3ecf5]">
            <svg viewBox="0 0 8 22" className="mb-10 h-[22px] w-2" stroke="#66799b" strokeWidth="1.500">
              <path d="M0 1.500h8M0 7.500h8M0 13.500h8M0 19.500h8" />
            </svg>
          </div>
          <div className="min-w-0 flex-1 px-2 pt-[11px] pr-[10px] pb-2 font-medium">
            <div className="flex items-center gap-[6px]">Фильтрующее значение<Info /></div>
            <FieldSelect name="Канал продаж" label="Фильтрующее значение" className="mt-[9px] h-[34px] border-[#a9adb4]" />
            <div className="mt-[11px] flex items-center">
              <span className="relative flex size-5 shrink-0">
                <input id="param" type="checkbox" defaultChecked className="size-5 appearance-none rounded bg-[#2284ce]" />
                <svg viewBox="0 0 20 20" className="pointer-events-none absolute inset-0 size-5" fill="none" stroke="#fff" strokeWidth="2"><path d="M5 10l3.500 4L15 6" /></svg>
              </span>
              <label htmlFor="param" className="mr-[7px] ml-[10px] w-[198px] truncate">Установить параметр или переменную</label>
              <Info />
            </div>
            <FieldSelect name="Канал продаж" label="Параметр" blue className="mt-[9px] h-[34px] border-[#a9adb4]" />
            <div className="mt-[11px] flex items-center gap-[6px]">Логика внутри группы<Info /></div>
            <div className="mt-[9px] h-[34px] rounded border border-[#a9adb4] bg-white" />
          </div>
        </div>
      </section>
    </div>
    <div className="w-2 rounded bg-[#dfe3ee]"><div className="h-[102px] rounded bg-[#7a8bae]" /></div>
  </div>
);

const widgets = [
  { name: 'Заголовок', icon: <TextIcon /> },
  { name: 'Канал продаж (столбец)', icon: <PuckIcon /> },
  { name: 'Таблица', icon: <ListIcon />, selected: true },
  { name: 'Фильтр', icon: <FunnelIcon className="mr-1 h-5 w-5 shrink-0" /> },
  { name: 'Фон заголовка', icon: <TextIcon /> },
  { name: 'Регион', icon: <PuckIcon /> },
  { name: 'Округ', icon: <PuckIcon /> },
  { name: 'Округ (столбец)', icon: <PuckIcon /> },
  { name: 'Номенклатура', icon: <PuckIcon /> },
  { name: 'Классификация', icon: <PuckIcon /> },
];

const WidgetList = () => (
  <div className="flex h-[280px] shrink-0 border-t border-[#cfd2da] bg-[#f3f3f3]">
    <ul className="mr-[2px] flex min-w-0 flex-1 flex-col gap-[2px] text-[13px]">
      {widgets.map((w) => (
        <li key={w.name} className={clsx('flex h-[26px] shrink-0 items-center rounded pl-[6px]', w.selected ? 'bg-[#de7026] font-medium text-white' : 'bg-[#fafafa] text-black')}>
          <svg viewBox="0 0 4 14" className="mr-2 h-[14px] w-1" fill={w.selected ? '#fff' : '#9a9a9a'}>
            <circle cx="2" cy="2" r="1.500" /><circle cx="2" cy="7" r="1.500" /><circle cx="2" cy="12" r="1.500" />
          </svg>
          {w.icon}
          {w.name}
        </li>
      ))}
    </ul>
    <div className="w-2 rounded bg-[#dfe3ee]"><div className="h-[99px] rounded bg-[#7a8bae]" /></div>
  </div>
);

const SidePanel = () => (
  <aside className="flex w-[350px] shrink-0 flex-col bg-white">
    <div className="flex h-[59px] shrink-0 items-center gap-2 border-b border-[#cfd6e4] px-4">
      <input aria-label="Название" defaultValue="Таблица" className="h-9 w-0 flex-1 rounded border border-[#b3c7e2] px-[13px] text-[14px] font-semibold text-[#25303f]" />
      <button className="h-9 w-28 rounded border border-[#8b9bab] bg-[#2284ce] text-[13px] font-semibold text-white">Сохранить</button>
    </div>
    <Properties />
    <WidgetList />
  </aside>
);

const MemoryPopup = () => (
  <div className="absolute top-0 right-[136px] z-10 w-[258px] overflow-hidden rounded-b-lg border border-t-0 border-gray-300 bg-white font-[Noto_Sans] text-[11px] text-[#444] shadow-md">
    <div className="flex h-[19px] items-start pl-3">
      <span className="-mt-2 leading-4">public.cubisio.ru</span>
    </div>
    <div className="flex h-[42px] items-center gap-[9px] bg-[#f1f1f1] pl-[13px]">
      <svg viewBox="0 0 14 12" className="h-3 w-[14px]" fill="none" stroke="#333" strokeWidth="1.200">
        <path d="M2.500 10.500A5.800 5.800 0 0 1 1 6.500a6 6 0 0 1 9-5M12 3.500a6 6 0 0 1-.5 7q-.3.500-1 .500h-7q-.7 0-1-.5M6 8l5.500-5" />
      </svg>
      Использование памяти: 755 МБ
    </div>
  </div>
);

export default function App() {
  return (
    <div className="relative flex h-screen overflow-hidden border-b border-[#cfdff5] font-[Inter,sans-serif] [&_svg]:block">
      <Rail />
      <Tree />
      <div className="flex min-w-0 flex-1 flex-col">
        <Header />
        <div className="flex min-h-0 flex-1">
          <Designer />
          <SidePanel />
        </div>
      </div>
      <MemoryPopup />
    </div>
  );
}
